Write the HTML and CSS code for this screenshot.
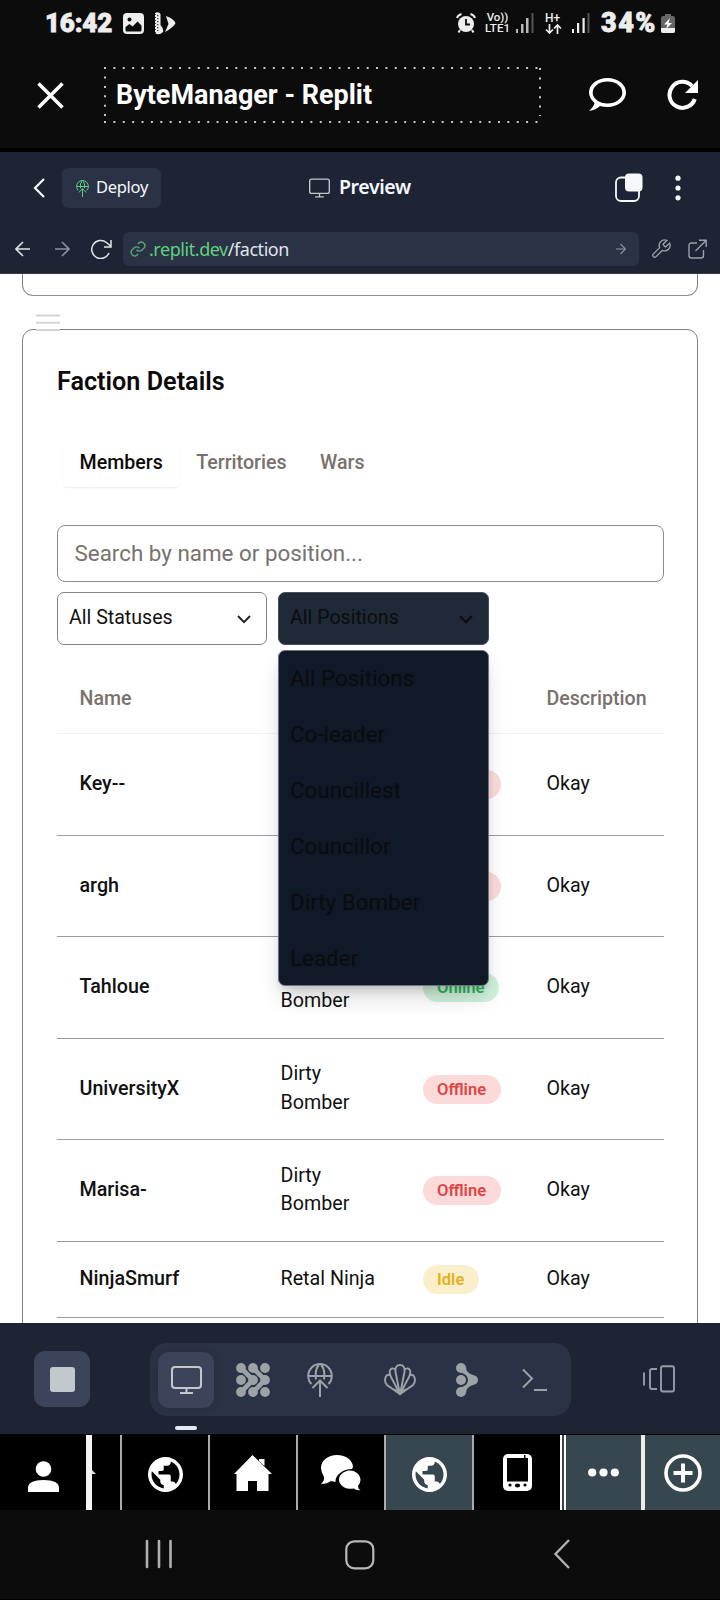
FILE: index.html
```html
<!DOCTYPE html>
<html lang="en">
<head>
<meta charset="utf-8">
<title>ByteManager - Replit</title>
<link rel="stylesheet" href="styles.css">
</head>
<body>
<svg width="0" height="0" class="defs">
  <defs>
    <symbol id="globe" viewBox="2 2 20 20"><path d="M12 2C6.48 2 2 6.48 2 12s4.480 10 10 10 10-4.480 10-10S17.520 2 12 2zm-1 17.930c-3.950-.490-7-3.850-7-7.930 0-.620.080-1.210.210-1.790L9 15v1c0 1.100.900 2 2 2v1.930zm6.900-2.540c-.260-.810-1-1.390-1.900-1.390h-1v-3c0-.550-.450-1-1-1H8v-2h2c.550 0 1-.450 1-1V7h2c1.100 0 2-.900 2-2v-.410c2.930 1.190 5 4.060 5 7.410 0 2.080-.800 3.970-2.100 5.390z"/></symbol>
    <symbol id="deploy" viewBox="0 0 26 34"><g fill="none" stroke="currentColor" stroke-width="2"><path d="M4.500 21A11.800 11.800 0 1 1 21.500 21M1.500 13H24.500M9 16.500Q7.500 7 12 1.500M17 16.500Q18.500 7 14 1.500M13 34V17M5.500 25L13 17.500L20.500 25"/></g></symbol>
    <symbol id="monitor" viewBox="0 0 31 28"><g fill="none" stroke="currentColor" stroke-width="2"><rect x="1" y="1" width="29" height="21" rx="3"/><path d="M15.500 22v5M9 27h13"/></g></symbol>
  </defs>
</svg>
<div class="screen">
  <div class="status">
    <span class="clock">16:42</span>
    <svg class="s-image" width="21" height="21" viewBox="0 0 21 21"><rect width="21" height="21" rx="4" fill="#eee"/><circle cx="6.500" cy="6.500" r="2" fill="#0c0c0c"/><path d="M2.500 14L6.500 11L9.500 13.500L14.500 8.500L18.500 12.500V17Q18.500 18.500 17 18.500H4Q2.500 18.500 2.500 17Z" fill="#0c0c0c"/></svg>
    <svg class="s-app" width="22" height="23" viewBox="0 0 22 23"><path d="M1 1Q5 -1 6.500 2V13Q10 17 9 20Q5 24 1 21Z" fill="#eee"/><path d="M1 2V22" stroke="#0c0c0c" stroke-width="1.500" stroke-dasharray="1 2"/><path d="M3.800 3V19" stroke="#0c0c0c" stroke-dasharray="1.300 1.700"/><path d="M12 4Q20 7 21.500 11Q20 15 11 20L14.500 12Z" fill="#eee"/></svg>
    <svg class="s-alarm" width="20" height="20" viewBox="0 0 20 20"><circle cx="10" cy="11" r="8" fill="#eee"/><path d="M10 6V11.500H14" stroke="#0c0c0c" stroke-width="1.800" fill="none"/><path d="M1 5Q2 2 5.500 1M19 5Q18 2 14.500 1M4 17L2.500 19.500M16 17L17.500 19.500" stroke="#eee" stroke-width="2" fill="none"/></svg>
    <span class="volte"><span>Vo))</span><span>LTE1</span></span>
    <svg class="s-sig1" width="18" height="20" viewBox="0 0 18 20"><g fill="#b9b9b9"><rect y="16" width="2" height="4"/><rect x="5" y="11" width="2.500" height="9"/><rect x="10" y="5" width="2.500" height="15"/></g><rect x="15.500" width="2" height="20" fill="#555"/></svg>
    <span class="hplus"><span>H+</span><svg width="17" height="10" viewBox="0 0 17 10"><path d="M4.500 0V9M1 5.500L4.500 9L8 5.500M12.500 10V1M9 4.500L12.500 1L16 4.500" fill="none" stroke="#eee" stroke-width="1.700"/></svg></span>
    <svg class="s-sig2" width="18" height="20" viewBox="0 0 18 20"><g fill="#eee"><rect y="16" width="2" height="4"/><rect x="5" y="10" width="2.200" height="10"/><rect x="10.500" y="5" width="2.200" height="15"/></g><rect x="15.500" width="2" height="20" fill="#555"/></svg>
    <span class="pct">34%</span>
    <svg class="s-bat" width="14" height="19" viewBox="0 0 14 19"><path d="M4 0h6v2h2q2 0 2 2v13q0 2-2 2H2q-2 0-2-2V4q0-2 2-2h2z" fill="#666"/><path d="M0 14H14V17Q14 19 12 19H2Q0 19 0 17Z" fill="#eee"/><path d="M9 4L3 10.500H6.500L5 15L11 9H7.500Z" fill="#fff"/></svg>
  </div>

  <header class="appbar">
    <svg class="a-close" width="27" height="27" viewBox="0 0 27 27"><path d="M1.500 1.500L25.500 25.500M25.500 1.500L1.500 25.500" stroke="#fff" stroke-width="3.500"/></svg>
    <div class="title">
      <svg class="dots" width="439" height="58" viewBox="0 0 439 58"><path d="M1 2H438M1 56H438M2 10.500V50M437 2V50" fill="none" stroke="#c8c8c8" stroke-width="2" stroke-dasharray="2 7.380"/></svg>
      <span>ByteManager - Replit</span>
    </div>
    <svg class="a-chat" width="39" height="35" viewBox="0 0 39 35"><path d="M19.500 1C30 1 38 7.500 38 15.500S30 30 19.500 30Q15 30 12 29Q8 33 1 34Q6 29.500 6.500 26Q1 21 1 15.500C1 7.500 9 1 19.500 1Z" fill="#fff"/><ellipse cx="19.500" cy="15.500" rx="14.800" ry="11" fill="#0c0c0c"/></svg>
    <svg class="a-reload" width="32" height="32" viewBox="0 0 32 32"><path d="M27.800 20A13 13 0 1 1 25 7" fill="none" stroke="#fff" stroke-width="4"/><path d="M31 1V14H18Z" fill="#fff"/></svg>
  </header>

  <div class="replit">
    <svg class="r-back" width="12" height="20" viewBox="0 0 12 20"><path d="M11 1L2 10L11 19" fill="none" stroke="#f5f9fc" stroke-width="2.200"/></svg>
    <div class="deploy"><svg width="13" height="17"><use href="#deploy"/></svg><span>Deploy</span></div>
    <svg class="r-mon" width="21" height="20"><use href="#monitor"/></svg>
    <span class="preview-label">Preview</span>
    <svg class="r-tabs" width="28" height="29" viewBox="0 0 28 29"><rect x="1" y="4.500" width="23" height="23.500" rx="5" fill="none" stroke="#f5f9fc" stroke-width="1.800"/><rect x="10" y="0.500" width="17.500" height="18" rx="4" fill="#f5f9fc"/></svg>
    <svg class="r-more" width="6" height="26" viewBox="0 0 6 26"><g fill="#f5f9fc"><circle cx="3" cy="3.200" r="2.600"/><circle cx="3" cy="13" r="2.600"/><circle cx="3" cy="22.800" r="2.600"/></g></svg>
  </div>

  <div class="urlbar">
    <svg class="u-back" width="15" height="16" viewBox="0 0 15 16"><path d="M15 8H1M8 1L1 8L8 15" fill="none" stroke="#dfe3e8" stroke-width="1.600"/></svg>
    <svg class="u-fwd" width="15" height="16" viewBox="0 0 15 16"><path d="M0 8H14M7 1L14 8L7 15" fill="none" stroke="#8b919d" stroke-width="1.600"/></svg>
    <svg class="u-reload" width="21" height="20" viewBox="0 0 21 20"><path d="M18 14A9 9 0 1 1 15.500 3.500L19.500 7M20 1V8H13" fill="none" stroke="#dfe3e8" stroke-width="1.500"/></svg>
    <div class="url">
      <svg width="16" height="16" viewBox="1 1 22 22"><path d="M10 13a5 5 0 0 0 7.500.500l3-3a5 5 0 0 0-7-7l-1.700 1.700M14 11a5 5 0 0 0-7.500-.500l-3 3a5 5 0 0 0 7 7l1.700-1.700" fill="none" stroke="#4fae70" stroke-width="1.900"/></svg>
      <span class="host">.replit.dev</span><span class="path">/faction</span>
      <svg class="go" width="10" height="12" viewBox="0 0 10 12"><path d="M0 6H9.500M4.500 1L9.500 6L4.500 11" fill="none" stroke="#8b919d" stroke-width="1.200"/></svg>
    </div>
    <svg class="u-wrench" width="20" height="20" viewBox="1 1 22 22"><path d="M14.700 6.300a1 1 0 0 0 0 1.400l1.600 1.600a1 1 0 0 0 1.400 0l3.770-3.770a6 6 0 0 1-7.940 7.940l-6.910 6.910a2.120 2.120 0 0 1-3-3l6.910-6.910a6 6 0 0 1 7.940-7.940l-3.760 3.760z" fill="none" stroke="#9ba0a9" stroke-width="1.500"/></svg>
    <svg class="u-ext" width="19" height="20" viewBox="0 0 19 20"><path d="M9 4H3.500Q1 4 1 6.500V16.500Q1 19 3.500 19H13Q15.500 19 15.500 16.500V11M7.500 12L18 1.500M11 1.200H18.200V8" fill="none" stroke="#9ba0a9" stroke-width="1.400"/></svg>
  </div>

  <main class="page">
    <div class="card-prev"></div>
    <svg class="burger" width="24" height="18" viewBox="0 0 24 18"><path d="M0 1.500H24M0 8.700H24M0 16H24" stroke="#d1d5db" stroke-width="2"/></svg>
    <section class="card">
      <h2>Faction Details</h2>
      <div class="tabs"><span class="tab on">Members</span><span class="tab">Territories</span><span class="tab">Wars</span></div>
      <div class="search">Search by name or position...</div>
      <div class="filters">
        <div class="select"><span>All Statuses</span><svg width="14" height="9" viewBox="0 0 14 9"><path d="M1 1L7 7.200L13 1" fill="none" stroke="#222" stroke-width="1.900"/></svg></div>
        <div class="select open"><span>All Positions</span><svg width="14" height="9" viewBox="0 0 14 9"><path d="M1 1L7 7.200L13 1" fill="none" stroke="#0c0d10" stroke-width="2.200"/></svg>
          <div class="menu"><div>All Positions</div><div>Co-leader</div><div>Councillest</div><div>Councillor</div><div>Dirty Bomber</div><div>Leader</div></div>
        </div>
      </div>
      <div class="table">
        <div class="row head"><span>Name</span><span></span><span></span><span>Description</span></div>
        <div class="row"><b>Key--</b><span></span><span><i class="badge off">Offline</i></span><span>Okay</span></div>
        <div class="row"><b>argh</b><span></span><span><i class="badge off">Offline</i></span><span>Okay</span></div>
        <div class="row"><b>Tahloue</b><span><br>Bomber</span><span><i class="badge online">Online</i></span><span>Okay</span></div>
        <div class="row"><b>UniversityX</b><span>Dirty Bomber</span><span><i class="badge off">Offline</i></span><span>Okay</span></div>
        <div class="row"><b>Marisa-</b><span>Dirty Bomber</span><span><i class="badge off">Offline</i></span><span>Okay</span></div>
        <div class="row short"><b>NinjaSmurf</b><span>Retal Ninja</span><span><i class="badge idle">Idle</i></span><span>Okay</span></div>
      </div>
    </section>
  </main>

  <div class="tools">
    <div class="stop"><i></i></div>
    <div class="group">
      <div class="tool active"><svg width="31" height="28"><use href="#monitor"/></svg></div>
      <div class="tool"><svg width="34" height="34" viewBox="0 0 34 34"><g fill="currentColor"><circle cx="5" cy="5" r="4.900"/><circle cx="17" cy="5" r="4.900"/><circle cx="29" cy="5" r="4.900"/><circle cx="5" cy="17" r="4.900"/><circle cx="17" cy="17" r="4.900"/><circle cx="29" cy="17" r="4.900"/><circle cx="5" cy="29" r="4.900"/><circle cx="17" cy="29" r="4.900"/><circle cx="29" cy="29" r="4.900"/></g><path d="M5 5L17 17L5 29M17 5L29 17L17 29" fill="none" stroke="currentColor" stroke-width="4.600"/></svg></div>
      <div class="tool"><svg width="26" height="34"><use href="#deploy"/></svg></div>
      <i class="sep"></i>
      <div class="tool"><svg width="32" height="32" viewBox="0 0 32 32"><path d="M15.300 27L11.500 8Q11 1 16 1T20.500 8L16.700 27M14.500 27L7 13Q4 5.500 8 4.500Q10 4 11.500 6M17.500 27L25 13Q28 5.500 24 4.500Q22 4 20.500 6M6 11Q2.500 10 1.500 13.500Q0 18 3 21L16 30L29 21Q32 18 30.500 13.500Q29.500 10 26 11" fill="none" stroke="currentColor" stroke-width="1.900"/><path d="M10 24L16 27L22 24L16 31.500Z" fill="currentColor"/></svg></div>
      <div class="tool"><svg width="22" height="34" viewBox="0 0 22 34"><g fill="currentColor"><circle cx="5" cy="5" r="5"/><circle cx="5" cy="17" r="5"/><circle cx="5" cy="29" r="5"/><path d="M10 4Q10 10 17 12Q22 13 22 17T17 22Q10 24 10 30L6 24Q12 22 12 17T6 10Z"/></g></svg></div>
      <div class="tool"><svg width="25" height="24" viewBox="0 0 25 24"><path d="M1 1.500L10 10.500L1 19.500M12 22H25" fill="none" stroke="currentColor" stroke-width="2"/></svg></div>
    </div>
    <svg class="split" width="32" height="28" viewBox="0 0 32 28"><path d="M1 7.500V20.500M14 4H9Q7 4 7 6V22Q7 24 9 24H14M20 1.200H29Q31 1.200 31 3.200V24.500Q31 26.500 29 26.500H20Q18 26.500 18 24.500V3.200Q18 1.200 20 1.200Z" fill="none" stroke="#969ba5" stroke-width="1.900"/></svg>
  </div>

  <div class="tabbar">
    <div class="t t-person"><svg width="31" height="31" viewBox="0 0 31 31"><g fill="#fff"><circle cx="15.500" cy="8" r="7.800"/><path d="M0 31V27Q0 19 15.500 19T31 27V31Z"/></g></svg></div>
    <div class="t t-sliver"><svg width="4" height="6" viewBox="0 0 4 6"><path d="M0 0L4 4H0Z" fill="#ddd"/></svg></div>
    <div class="t"><svg width="35" height="35" fill="#fff"><use href="#globe"/></svg></div>
    <div class="t t-home"><svg width="38" height="36" viewBox="0 0 38 36"><path d="M18.500 0L38 19H34.500V36H23V26H14V36H2.500V19H0Z M25 4H30.500V11L25 6Z" fill="#fff"/></svg></div>
    <div class="t t-home"><svg width="40" height="36" viewBox="0 0 40 36"><path d="M16 0C25 0 32 5.500 32 12L31 14C22 14 14 20 14.500 27Q12 26.500 10 26Q6 29 0 29Q4 25 3 22Q0 17 0 13C0 5.500 7 0 16 0Z" fill="#fff"/><path d="M29 15.500C35 15.500 39.500 20 39.500 25Q39.500 28 37 31Q37 34 39.500 35Q35 36 33 33.500Q23 35 19.500 29C15 22 22 15.500 29 15.500Z" fill="#fff"/></svg></div>
    <div class="t teal"><svg width="35" height="35" fill="#fff"><use href="#globe"/></svg></div>
    <div class="t t-tablet"><svg width="29" height="37" viewBox="0 0 29 37"><rect width="29" height="37" rx="5" fill="#fff"/><path d="M4 4H21V1H22.500V4H25V27.500H4Z" fill="#000"/><g fill="#000"><circle cx="7" cy="31" r="1.600"/><ellipse cx="14.500" cy="31.500" rx="2.600" ry="2"/><circle cx="22" cy="31" r="1.600"/></g></svg></div>
    <div class="t t-more teal"><svg width="31" height="9" viewBox="0 0 31 9"><g fill="#fff"><circle cx="4.200" cy="4.500" r="4.100"/><circle cx="15.500" cy="4.500" r="4.100"/><circle cx="26.800" cy="4.500" r="4.100"/></g></svg></div>
    <div class="t t-add teal"><svg width="38" height="38" viewBox="0 0 38 38"><circle cx="19" cy="19" r="17" fill="none" stroke="#fff" stroke-width="3.600"/><path d="M19 9.500V28.500M9.500 19H28.500" stroke="#fff" stroke-width="4"/></svg></div>
  </div>

  <div class="nav">
    <svg class="n-recent" width="28" height="30" viewBox="0 0 28 30"><path d="M2 2V28M14 2V28M25.500 2V28" stroke="#b0b0b0" stroke-width="2.600" stroke-linecap="round"/></svg>
    <svg class="n-home" width="30" height="30" viewBox="0 0 30 30"><rect x="1.300" y="1.300" width="27" height="27" rx="8" fill="none" stroke="#b8b8b8" stroke-width="2.200"/></svg>
    <svg class="n-back" width="18" height="32" viewBox="0 0 18 32"><path d="M16 2L2.500 16L16 30" fill="none" stroke="#b0b0b0" stroke-width="2.400"/></svg>
  </div>
</div>
</body>
</html>
```

FILE: styles.css
```css
* { box-sizing: border-box; }
body { margin: 0; background: #000; font-family: Roboto, sans-serif; }
svg { display: block; flex: none; }
i { font-style: normal; }
.defs { position: absolute; }
.screen { width: 720px; height: 1600px; display: flex; flex-direction: column; overflow: hidden; }
.screen > * { flex: none; }

.status { height: 46px; background: #0c0c0c; display: flex; align-items: center; padding-left: 45px; color: #eee; white-space: nowrap; }
.clock { width: 66px; font-size: 26px; font-weight: 900; letter-spacing: -0.2px; -webkit-text-stroke: 0.8px #eee; }
.s-image { margin-left: 12px; margin-top: 1px; }
.s-app { margin-left: 10px; }
.s-alarm { margin-left: 280px; }
.volte { margin-left: 9px; width: 25px; display: flex; flex-direction: column; font-size: 11.500px; line-height: 11px; font-weight: 500; text-align: center; }
.s-sig1 { margin-left: 6px; }
.hplus { margin-left: 11px; width: 17px; font-size: 12px; line-height: 11px; font-weight: 500; display: flex; flex-direction: column; }
.s-sig2 { margin-left: 10px; }
.pct { margin-left: 11px; width: 57px; font-size: 27px; font-weight: 900; letter-spacing: 1.500px; -webkit-text-stroke: 0.8px #eee; }
.s-bat { margin-left: 3px; }

.appbar { height: 102px; background: #0c0c0c; display: flex; align-items: flex-start; padding-left: 37px; }
.a-close { margin-top: 36px; }
.title { position: relative; margin: 20px 0 0 39px; width: 439px; height: 58px; padding-left: 13px; display: flex; align-items: center; color: #fff; font-size: 26.950px; font-weight: 700; white-space: nowrap; }
.title span { padding-bottom: 1px; }
.dots { position: absolute; left: 0; top: 0; }
.a-chat { margin: 31px 0 0 46px; }
.a-reload { margin: 33px 0 0 40px; }

.replit { height: 76px; border-top: 4px solid #000; background: #1e2433; display: flex; align-items: center; padding: 0 0 6px 33px; color: #f5f9fc; }
.r-back { margin-top: 6px; }
.deploy { margin: 6px 0 0 17px; width: 99px; height: 40px; border-radius: 6px; background: #2b3245; display: flex; align-items: center; padding-left: 14px; font: 16.500px "Noto Sans", sans-serif; }
.deploy svg { color: #5fd080; margin-right: 7px; }
.deploy span { padding-bottom: 3px; letter-spacing: -0.300px; }
.r-mon { color: #c2c8cc; margin: 5px 9px 0 148px; }
.preview-label { width: 74px; font: 600 19.500px "Noto Sans", sans-serif; letter-spacing: -0.400px; margin-top: 3px; }
.r-tabs { margin: 4px 0 0 202px; }
.r-more { margin: 6px 0 0 32px; }

.urlbar { height: 50px; background: #1e2433; border-bottom: 1px solid #33394a; display: flex; align-items: center; padding-left: 15px; }
.u-fwd { margin-left: 25px; }
.u-reload { margin-left: 21px; }
.url { margin-left: 11px; width: 516px; height: 34px; border-radius: 6px; background: #2b3245; display: flex; align-items: center; padding-left: 7px; font: 18px "Noto Sans", sans-serif; color: #dfe4ea; letter-spacing: -0.450px; }
.host { color: #5fd080; margin-left: 3px; }
.go { margin-left: auto; margin-right: 13px; }
.u-wrench { margin-left: 12px; }
.u-ext { margin-left: 17px; }

.page { height: 1049px; background: #fff; overflow: hidden; position: relative; padding: 0 22px; color: #111; }
.card-prev { height: 22px; border: 1px solid #7d828c; border-top: 0; border-radius: 0 0 11px 11px; border-bottom-color: #8a909a; }
.burger { position: absolute; left: 36px; top: 40px; }
.card { margin-top: 33px; height: 1100px; border: 1px solid #7d828c; border-radius: 11px; padding: 34px 34px 0; }
h2 { margin: 0; height: 36px; line-height: 36px; font-size: 25.200px; font-weight: 600; color: #0c0a09; }
.tabs { margin-top: 41px; padding-left: 6px; display: flex; height: 46px; }
.tab { padding: 0 17px 0 16.500px; line-height: 43px; font-size: 19.600px; font-weight: 500; color: #78716c; border-radius: 5px; }
.tab.on { color: #0c0a09; box-shadow: 0 1px 2px rgba(0,0,0,.07); }
.search { margin-top: 38px; height: 57px; width: 607px; border: 1px solid #858b95; border-radius: 8px; padding-left: 16.500px; line-height: 54px; font-size: 22.400px; color: #78716c; }
.filters { margin-top: 10px; display: flex; gap: 11px; }
.select { position: relative; width: 210px; height: 53px; border: 1px solid #7d828c; border-radius: 7px; padding: 0 15px 0 11px; display: flex; justify-content: space-between; font-size: 19.600px; line-height: 50px; color: #111; }
.select > svg { margin-top: 22px; }
.select.open { width: 211px; background: #1f2937; color: #0c0d10; border-color: #46505d; }
.menu { position: absolute; left: -1px; top: 57px; width: 211px; height: 336px; border: 1px solid #6b7280; border-radius: 7px; background: #111827; box-shadow: 0 14px 22px -4px rgba(0,0,0,.18), 0 5px 9px -3px rgba(0,0,0,.14); font-size: 22.400px; line-height: 54px; padding-left: 11px; color: #0b0c0f; z-index: 2; }
.menu div { height: 56px; }
.table { width: 607px; margin-top: 20px; }
.row { display: grid; grid-template-columns: 201px 142px 124px 140px; height: 101.500px; align-items: center; border-bottom: 1px solid #979da6; font-size: 19.700px; line-height: 28.500px; }
.row > * { padding-left: 22.500px; padding-right: 20px; padding-bottom: 0; font-weight: 400; }
.row > b { font-weight: 500; padding-right: 0; }
.row > span:nth-child(3) { padding: 1px 0 0 22.500px; display: flex; }
.row > span:nth-child(4) { padding-right: 0; }
.row.head { height: 69px; border-color: #f2f2f3; color: #78716c; }
.row.head > * { font-weight: 500; font-size: 19.600px; padding-top: 1px; }
.row.short { height: 76px; }
.row.short > span:nth-child(2) { padding-right: 0; }
.badge { height: 29px; line-height: 29px; border-radius: 15px; padding: 0 14.500px; font-size: 16.600px; font-weight: 600; }
.off { background: #fcdada; color: #df4545; }
.online { background: #cff2db; color: #2bb95c; }
.idle { background: #fbeecb; color: #e2b11f; }

.tools { height: 111px; background: #1e2433; display: flex; padding-left: 34px; }
.stop { width: 56px; height: 56px; margin-top: 28px; border-radius: 11px; background: #3c445c; display: grid; place-items: center; }
.stop i { width: 25px; height: 25px; border-radius: 3px; background: #c2c8cc; }
.group { margin: 20px 0 0 60px; width: 421px; height: 73px; border-radius: 17px; background: #2b3245; display: flex; align-items: center; padding-left: 8px; color: #9da2a6; }
.tool { width: 56px; height: 56px; margin-right: 11px; display: grid; place-items: center; flex: none; }
.tool.active { position: relative; background: #3c445c; border-radius: 11px; color: #c2c8cc; box-shadow: 0 0 8px rgba(0,0,0,.12); }
.tool.active::after { content: ""; position: absolute; left: 17px; top: 74px; width: 22px; height: 4px; border-radius: 2px; background: #e5e8f5; }
.sep { width: 1px; height: 22px; background: #3c445c; margin-right: 13px; }
.split { margin: 42px 0 0 72px; }

.tabbar { height: 76px; border-top: 1px solid #000; display: flex; background: #000; }
.t { width: 88px; border-left: 2px solid #aaa; display: grid; place-items: center; padding-top: 3px; }
.t-home { padding-top: 1px; }
.t-person { width: 86px; border: 0; padding-top: 8px; }
.t-sliver { width: 34px; border-left: 6px solid #f4f4f4; place-items: center start; padding-top: 0; }
.teal { background: #37474f; }
.t-tablet { width: 88px; padding-top: 0; }
.t-more { width: 81px; border-left: 6px double #fff; padding-top: 0; }
.t-add { width: 79px; border-left: 4px solid #ececec; padding-top: 0; }

.nav { height: 90px; background: #0c0c0c; border-bottom: 1px solid #000; display: flex; padding-left: 145px; }
.n-recent { margin-top: 29px; }
.n-home { margin: 30px 0 0 172px; }
.n-back { margin: 28px 0 0 178px; }
```
